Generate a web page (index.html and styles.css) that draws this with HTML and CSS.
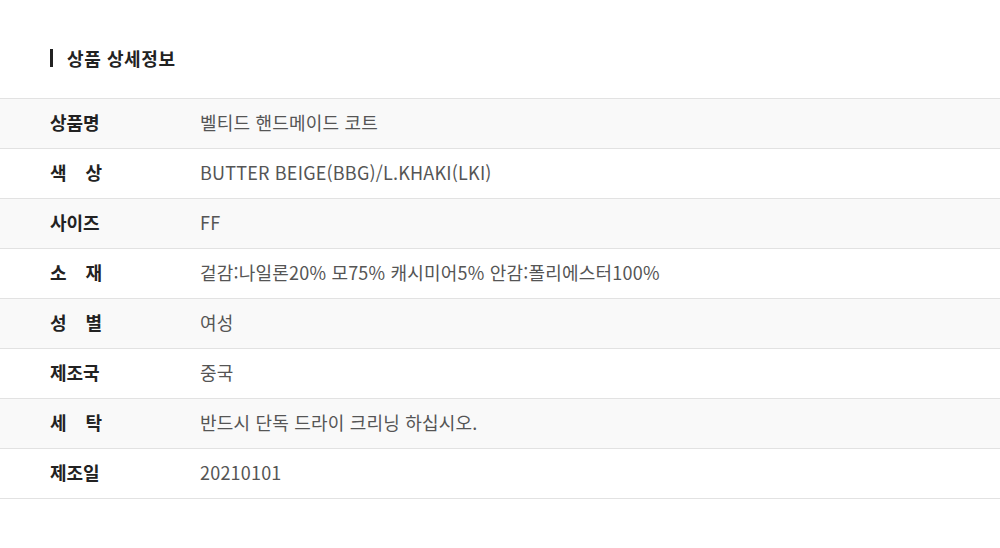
FILE: index.html
```html
<!DOCTYPE html>
<html lang="ko">
<head>
  <meta charset="UTF-8" />
  <meta name="viewport" content="width=device-width, initial-scale=1.0" />
  <title>상품 상세정보</title>
  <link rel="stylesheet" href="styles.css">
</head>
<body>
  <h2 class="title">상품 상세정보</h2>

  <table class="info">
    <tr>
      <th><span class="label">상품명</span></th>
      <td>벨티드 핸드메이드 코트</td>
    </tr>
    <tr>
      <th><span class="label">색 상</span></th>
      <td>BUTTER BEIGE(BBG)/L.KHAKI(LKI)</td>
    </tr>
    <tr>
      <th><span class="label">사이즈</span></th>
      <td>FF</td>
    </tr>
    <tr>
      <th><span class="label">소 재</span></th>
      <td>겉감:나일론20% 모75% 캐시미어5% 안감:폴리에스터100%</td>
    </tr>
    <tr>
      <th><span class="label">성 별</span></th>
      <td>여성</td>
    </tr>
    <tr>
      <th><span class="label">제조국</span></th>
      <td>중국</td>
    </tr>
    <tr>
      <th><span class="label">세 탁</span></th>
      <td>반드시 단독 드라이 크리닝 하십시오.</td>
    </tr>
    <tr>
      <th><span class="label">제조일</span></th>
      <td>20210101</td>
    </tr>
  </table>
</body>
</html>
```

FILE: styles.css
```css
    body {
      background: white;
      font-family: "Noto Sans CJK KR", "Noto Sans", sans-serif;
      margin: 0;
      padding: 46px 0 0;
    }

    .title {
      display: flex;
      align-items: center;
      gap: 14px;
      margin: 0 0 28px 50px;
      font-size: 18px;
      font-weight: bold;
      color: #222;
      letter-spacing: 0.6px;
      line-height: 24px;
    }

    .title::before {
      content: "";
      width: 3px;
      height: 18px;
      background: #222;
    }

    .info {
      width: 100%;
      border-collapse: collapse;
      border-top: 1px solid #e2e2e2;
    }

    .info tr {
      height: 50px;
      border-bottom: 1px solid #e2e2e2;
    }

    .info tr:nth-child(odd) {
      background: #f9f9f9;
    }

    .info th {
      width: 150px;
      padding: 0 0 4px 50px;
      text-align: left;
      font-size: 18px;
      font-weight: bold;
      color: #222;
    }

    .label {
      display: inline-block;
      width: 52px;
      text-align: justify;
      text-align-last: justify;
    }

    .info td {
      padding: 0 0 4px;
      font-size: 18px;
      color: #555;
      letter-spacing: 0.2px;
    }
```
